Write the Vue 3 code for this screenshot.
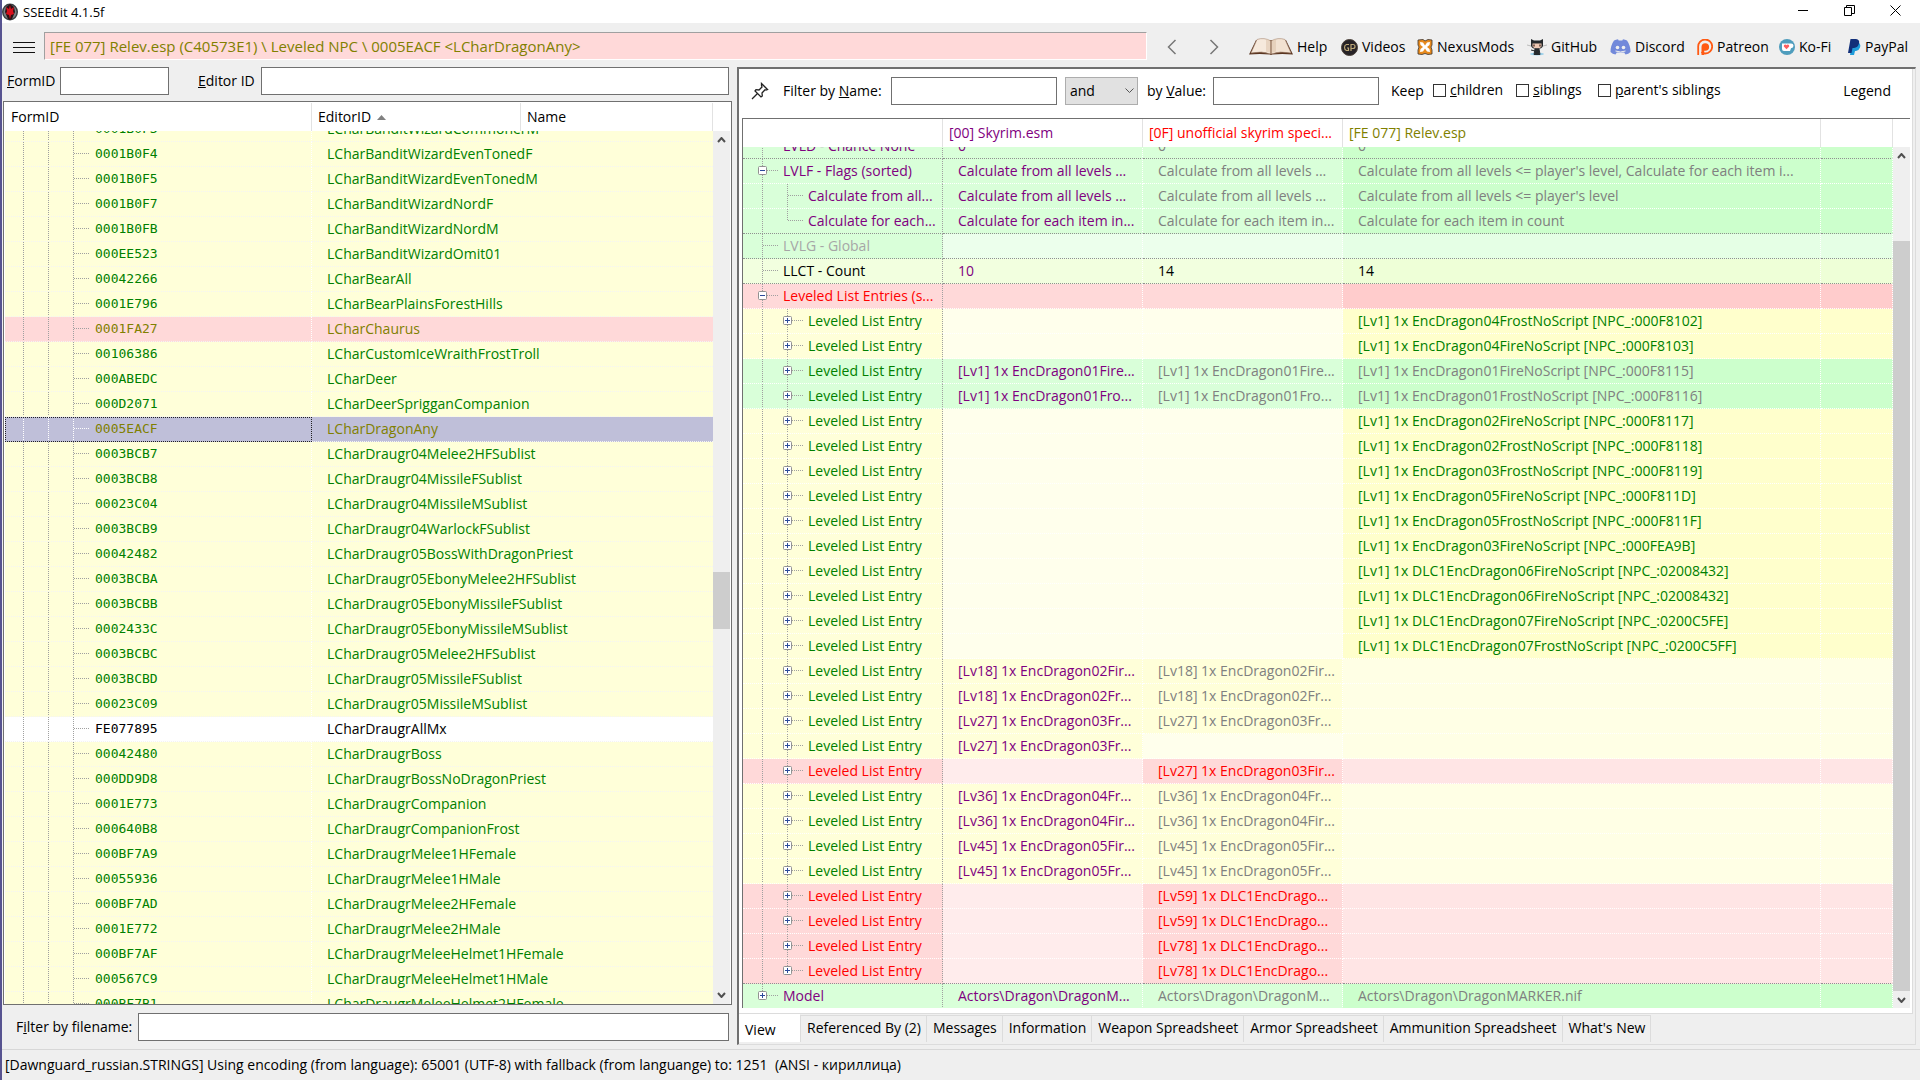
<template>
  <div class="window">
    <header class="titlebar">
      <svg class="app-icon" width="16" height="18" viewBox="0 0 16 18" aria-hidden="true">
        <ellipse cx="8" cy="9" rx="8" ry="8.500" fill="#3c4044" />
        <ellipse cx="8" cy="9" rx="6.500" ry="7" fill="#7b8084" />
        <path d="M8 1 12 4 13 9 10 16 8 17 6 16 3 9 4 4z" fill="#2a1114" />
        <path d="M8 2 9 6 12 4 11 8 12 11 9 12 8 16 7 12 4 11 5 8 4 4 7 6z" fill="#d80f1c" />
      </svg>
      <h1 class="titlebar__text">SSEEdit 4.1.5f</h1>
      <div class="titlebar__controls">
        <button type="button" aria-label="Minimize">
          <svg width="11" height="11" viewBox="0 0 11 11"><path d="M0 5.500H10" /></svg>
        </button>
        <button type="button" aria-label="Restore">
          <svg width="11" height="11" viewBox="0 0 11 11"><path d="M.5 2.500h7v8h-7zM2.500 2.500v-2h8v8h-3" /></svg>
        </button>
        <button type="button" aria-label="Close">
          <svg width="11" height="11" viewBox="0 0 11 11"><path d="M.5.5l10 10M10.500.5l-10 10" /></svg>
        </button>
      </div>
    </header>

    <nav class="toolbar">
      <button type="button" class="toolbar__menu" aria-label="Menu">
        <svg width="22" height="13" viewBox="0 0 22 13"><path d="M0 1.500h22M0 6.500h22M0 11.500h22" stroke="#111" /></svg>
      </button>
      <input class="toolbar__path" type="text" readonly aria-label="Path" :value="currentPath" />
      <div class="toolbar__history">
        <button type="button" aria-label="Back">
          <svg width="10" height="16" viewBox="0 0 10 16"><path d="M8.500 1 1.500 8l7 7" /></svg>
        </button>
        <button type="button" aria-label="Forward">
          <svg width="10" height="16" viewBox="0 0 10 16"><path d="M1.500 1l7 7-7 7" /></svg>
        </button>
      </div>
      <div class="links">
        <a href="#help">
          <svg width="44" height="18" viewBox="0 0 44 18">
            <path d="M7 2 0 16.500q11-1 21 0 1 1 2 0 10-1 21 0L37 2z" fill="#5a3520" />
            <path d="M8 1.500 2 15q11-2.500 20 1V3Q15-1 8 1.500z" fill="#f6e9dc" stroke="#a78a75" stroke-width=".6" />
            <path d="M36 1.500 42 15q-11-2.500-20 1V3q7-4 14-1.500z" fill="#f2e2d2" stroke="#a78a75" stroke-width=".6" />
            <path d="M17 1.500q5 0 5 2.500v11l-5-1.500zM27 1.500q-5 0-5 2.500v11l5-1.500z" fill="#d9bfa6" opacity=".5" />
            <path d="M22 3v13" stroke="#8a6850" />
          </svg>
          Help
        </a>
        <a href="#videos">
          <svg width="17" height="17" viewBox="0 0 17 17">
            <circle cx="8.500" cy="8.500" r="8" fill="#262226" stroke="#4a4038" />
            <path d="M8 5.500H5.500Q3.500 6 3.500 8.500T5.500 11.500H7.500V9H6M10 12V5.500h2q2 0 2 2t-2 2h-2" fill="none" stroke="#bca776" stroke-width="1.200" />
          </svg>
          Videos
        </a>
        <a href="#nexus">
          <svg width="16" height="16" viewBox="0 0 16 16">
            <path d="M1 1l5-.5 2 1.500 3-1.500 4 .5v5l-1 2 1 3v4l-4 .500-3-1-3 1-4-.5v-4l1-3-1-2z" fill="#e88a1d" stroke="#3d352e" stroke-width=".8" />
            <path d="M3 3l3 .5 2 3 2-3 3-.5-.5 3-2.500 2 2.500 2 .5 3-3-.5-2-3-2 3-3 .5.5-3 2.500-2-2.500-2z" fill="#fff" />
          </svg>
          NexusMods
        </a>
        <a href="#github">
          <svg width="20" height="18" viewBox="0 0 20 18">
            <ellipse cx="10" cy="16" rx="7" ry="1.500" fill="#9ad0ea" />
            <path d="M4 1l3 1.500h6L16 1v7q-1 3-6 3T4 8z" fill="#24282b" />
            <path d="M5.500 5.500h9v3q-1 2-4.500 2t-4.500-2z" fill="#efc9b4" />
            <path d="M7 6.500v2M13 6.500v2" stroke="#51342b" stroke-width="1.400" />
            <path d="M8 11h4l1 5.500H7zM8 13l-4-1" fill="#24282b" stroke="#24282b" />
            <path d="M0 7l4 1M20 7l-4 1" stroke="#9b9b9b" stroke-width=".6" />
          </svg>
          GitHub
        </a>
        <a href="#discord">
          <svg width="21" height="16" viewBox="0 0 21 16">
            <path d="M4 1.500Q6 .5 8 .3l.7 1.200h3.600L13 .3q2 .2 4 1.200 3.500 5 3.500 11.500-2 2-5 2.500l-1.300-2H6.800l-1.300 2q-3-.5-5-2.500Q.5 6.500 4 1.500z" fill="#7289da" />
            <circle cx="7.500" cy="8.500" r="1.800" fill="#efefef" />
            <circle cx="13.500" cy="8.500" r="1.800" fill="#efefef" />
            <path d="M5.500 12q5 2 10 0" fill="none" stroke="#efefef" />
          </svg>
          Discord
        </a>
        <a href="#patreon">
          <svg width="16" height="16" viewBox="0 0 16 16">
            <path d="M1.200 16V8a7 7 0 1 1 7 6.500Q6 14.500 4.500 13" fill="none" stroke="#ff5a13" stroke-width="1.800" />
            <path d="M4.500 16V8a3.800 3.800 0 1 1 3.800 3.800H7.200V16z" fill="#ff5a13" />
          </svg>
          Patreon
        </a>
        <a href="#kofi">
          <svg width="16" height="16" viewBox="0 0 16 16">
            <circle cx="8" cy="8" r="8" fill="#4f9dbd" />
            <path d="M3 4.500h9q2.500 0 2.500 2.300T12 9.300L11 12H5q-2 0-2-2z" fill="#fff" />
            <path d="M7.500 10.200 4.800 7.500Q4.500 5.500 6.200 5.500q1 0 1.300.8.300-.8 1.300-.8 1.700 0 1.400 2z" fill="#ff5f5f" />
          </svg>
          Ko-Fi
        </a>
        <a href="#paypal">
          <svg width="13" height="16" viewBox="0 0 13 16">
            <path d="M4 4h7q2 1.500 1 4.500T8 12H7l-1 4H2z" fill="#1f9ddb" />
            <path d="M2.500 0H8q4 .5 3 4.500T6 9H4.500l-1 5H0z" fill="#12307a" />
          </svg>
          PayPal
        </a>
      </div>
    </nav>

    <main class="workspace">
      <section class="nav-pane">
        <div class="id-filter">
          <label for="form-id"><u>F</u>ormID</label>
          <input id="form-id" class="field id-filter__form" type="text" />
          <label class="id-filter__editor-label" for="editor-id"><u>E</u>ditor ID</label>
          <input id="editor-id" class="field id-filter__editor" type="text" />
        </div>

        <div class="nav-tree">
          <div ref="navScroll" class="scroller">
            <table>
              <colgroup>
                <col class="col-form" />
                <col class="col-editor" />
                <col />
              </colgroup>
              <thead>
                <tr>
                  <th>FormID</th>
                  <th>
                    EditorID
                    <svg width="9" height="5" viewBox="0 0 9 5"><path d="M0 5 4.500 0 9 5z" fill="#808080" /></svg>
                  </th>
                  <th>Name</th>
                </tr>
              </thead>
              <tbody>
                <tr v-for="[formId, editorId, state] in records" :key="formId" :class="state">
                  <td class="form-cell">
                    <div class="tree-cell">
                      <svg class="branch" width="90" height="24">
                        <path d="M18.500 0v24M43.500 0v24M68.500 0v24M69 11.500h16" />
                      </svg>
                      {{ formId }}
                    </div>
                  </td>
                  <td class="editor-cell" colspan="2">{{ editorId }}</td>
                </tr>
              </tbody>
            </table>
          </div>
          <div class="scrollbar">
            <button type="button" aria-label="Scroll up"><svg width="9" height="6" viewBox="0 0 9 6"><path d="M1 5l3.500-4L8 5" /></svg></button>
            <div class="scrollbar__gap" :style="{ flexGrow: 423 }"></div>
            <div class="scrollbar__thumb" :style="{ flexGrow: 57 }"></div>
            <div class="scrollbar__gap" :style="{ flexGrow: 358 }"></div>
            <button type="button" aria-label="Scroll down"><svg width="9" height="6" viewBox="0 0 9 6"><path d="M1 1l3.500 4L8 1" /></svg></button>
          </div>
        </div>

        <div class="file-filter">
          <label for="file-name">F<u>i</u>lter by filename:</label>
          <input id="file-name" class="field" type="text" />
        </div>
      </section>

      <section class="view-pane">
        <div class="view-body">
          <div class="view-filter">
            <button type="button" class="view-filter__pin" aria-label="Pin">
              <svg width="18" height="18" viewBox="0 0 18 18">
                <path d="M10.500 1.500l6 6-1.500.5-1-.3-3 3.300.3 3-1.300 1-6-6 1-1.300 3 .3 3-3-.5-1.500zM6.500 11.500l-5.500 5.500" fill="none" stroke="#222" stroke-width="1.300" />
              </svg>
            </button>
            <label for="by-name">Filter by <u>N</u>ame:</label>
            <input id="by-name" class="field" type="text" />
            <div class="combo">
              <select aria-label="Filter operator">
                <option>and</option>
                <option>or</option>
              </select>
              <svg width="9" height="6" viewBox="0 0 9 6"><path d="M.5.5l4 4 4-4" fill="none" stroke="#555" /></svg>
            </div>
            <label class="view-filter__value" for="by-value">by <u>V</u>alue:</label>
            <input id="by-value" class="field" type="text" />
            <span class="view-filter__keep">Keep</span>
            <div class="checks">
              <label><input type="checkbox" /><span><u>c</u>hildren</span></label>
              <label><input type="checkbox" /><span><u>s</u>iblings</span></label>
              <label><input type="checkbox" /><span><u>p</u>arent's siblings</span></label>
            </div>
            <button type="button" class="view-filter__legend">Legend</button>
          </div>

          <div class="record-grid">
            <div ref="gridScroll" class="scroller">
              <table>
                <colgroup>
                  <col class="col-plugin" />
                  <col class="col-plugin" />
                  <col class="col-plugin" />
                  <col class="col-wide" />
                  <col />
                </colgroup>
                <thead>
                  <tr>
                    <th></th>
                    <th class="purple">[00] Skyrim.esm</th>
                    <th class="red">[0F] unofficial skyrim speci...</th>
                    <th class="olive">[FE 077] Relev.esp</th>
                    <th></th>
                  </tr>
                </thead>
                <tbody>
                  <tr
                    v-for="(row, idx) in gridRows"
                    :key="idx"
                    :class="['tone-' + row.tone, { 'group-end': row.groupEnd }]"
                  >
                    <td class="name-cell" :class="row.color">
                      <div class="tree-cell">
                        <svg class="branch" :width="row.level ? 65 : 40" height="24">
                          <path :d="branchPath(row)" />
                          <g v-if="row.node" :transform="`translate(${row.level ? 40 : 15} 7)`">
                            <rect class="node" x=".5" y=".5" width="8" height="8" rx="1" />
                            <path class="node-mark" :d="row.node === '+' ? 'M2 4.500h5M4.500 2v5' : 'M2 4.500h5'" />
                          </g>
                        </svg>
                        <span>{{ row.name }}</span>
                      </div>
                    </td>
                    <td
                      v-for="(cell, col) in row.cells"
                      :key="col"
                      :class="[cell[1], { relev: col === 2, light: !cell[0] && !row.solid }]"
                    >{{ cell[0] }}</td>
                    <td class="relev" :class="{ light: !row.cells[2][0] && !row.solid }"></td>
                  </tr>
                </tbody>
              </table>
            </div>
            <div class="scrollbar">
              <button type="button" aria-label="Scroll up"><svg width="9" height="6" viewBox="0 0 9 6"><path d="M1 5l3.500-4L8 5" /></svg></button>
              <div class="scrollbar__gap" :style="{ flexGrow: 77 }"></div>
              <div class="scrollbar__thumb" :style="{ flexGrow: 751 }"></div>
              <button type="button" aria-label="Scroll down"><svg width="9" height="6" viewBox="0 0 9 6"><path d="M1 1l3.500 4L8 1" /></svg></button>
            </div>
          </div>
        </div>

        <div class="tabs" role="tablist">
          <button
            v-for="tab in tabs"
            :key="tab"
            type="button"
            role="tab"
            class="tab"
            :class="{ 'tab--active': tab === activeTab }"
            :aria-selected="tab === activeTab"
            @click="activeTab = tab"
          >
            {{ tab }}
          </button>
        </div>
      </section>
    </main>

    <footer class="statusbar">[Dawnguard_russian.STRINGS] Using encoding (from language): 65001 (UTF-8) with fallback (from languange) to: 1251&nbsp; (ANSI - кириллица)</footer>
  </div>
</template>

<script setup>
import { onMounted, ref } from 'vue';

const currentPath = '[FE 077] Relev.esp (C40573E1) \\ Leveled NPC \\ 0005EACF <LCharDragonAny>';

const records = [
  ['0001B0F3', 'LCharBanditWizardCommonerM'],
  ['0001B0F4', 'LCharBanditWizardEvenTonedF'],
  ['0001B0F5', 'LCharBanditWizardEvenTonedM'],
  ['0001B0F7', 'LCharBanditWizardNordF'],
  ['0001B0FB', 'LCharBanditWizardNordM'],
  ['000EE523', 'LCharBanditWizardOmit01'],
  ['00042266', 'LCharBearAll'],
  ['0001E796', 'LCharBearPlainsForestHills'],
  ['0001FA27', 'LCharChaurus', 'conflict'],
  ['00106386', 'LCharCustomIceWraithFrostTroll'],
  ['000ABEDC', 'LCharDeer'],
  ['000D2071', 'LCharDeerSprigganCompanion'],
  ['0005EACF', 'LCharDragonAny', 'selected'],
  ['0003BCB7', 'LCharDraugr04Melee2HFSublist'],
  ['0003BCB8', 'LCharDraugr04MissileFSublist'],
  ['00023C04', 'LCharDraugr04MissileMSublist'],
  ['0003BCB9', 'LCharDraugr04WarlockFSublist'],
  ['00042482', 'LCharDraugr05BossWithDragonPriest'],
  ['0003BCBA', 'LCharDraugr05EbonyMelee2HFSublist'],
  ['0003BCBB', 'LCharDraugr05EbonyMissileFSublist'],
  ['0002433C', 'LCharDraugr05EbonyMissileMSublist'],
  ['0003BCBC', 'LCharDraugr05Melee2HFSublist'],
  ['0003BCBD', 'LCharDraugr05MissileFSublist'],
  ['00023C09', 'LCharDraugr05MissileMSublist'],
  ['FE077895', 'LCharDraugrAllMx', 'own'],
  ['00042480', 'LCharDraugrBoss'],
  ['000DD9D8', 'LCharDraugrBossNoDragonPriest'],
  ['0001E773', 'LCharDraugrCompanion'],
  ['000640B8', 'LCharDraugrCompanionFrost'],
  ['000BF7A9', 'LCharDraugrMelee1HFemale'],
  ['00055936', 'LCharDraugrMelee1HMale'],
  ['000BF7AD', 'LCharDraugrMelee2HFemale'],
  ['0001E772', 'LCharDraugrMelee2HMale'],
  ['000BF7AF', 'LCharDraugrMeleeHelmet1HFemale'],
  ['000567C9', 'LCharDraugrMeleeHelmet1HMale'],
  ['000BF7B1', 'LCharDraugrMeleeHelmet2HFemale'],
];

const empty = ['', ''];

// Leveled list entry; the cells are Skyrim.esm, USSEP and Relev.esp.
const entry = (tone, color, base, patch, relev) => ({
  name: 'Leveled List Entry',
  tone,
  color,
  level: 1,
  node: '+',
  cells: [
    base ? [base, 'purple'] : empty,
    patch ? [patch, color === 'red' ? 'red' : 'gray'] : empty,
    relev ? [relev, tone === 'green' ? 'gray' : 'dark-green'] : empty,
  ],
});

const added = (text) => entry('yellow', 'dark-green', '', '', `[Lv1] 1x ${text}`);
const kept = (text, relev) => entry('green', 'dark-green', text, text, relev);
const removed = (text) => entry('yellow', 'dark-green', text, text, '');
const lost = (text) => entry('red', 'red', '', text, '');

const flags = 'Calculate from all levels ...';
const perItem = 'Calculate for each item in...';

const gridRows = [
  {
    name: 'LVLD - Chance None', tone: 'green', color: 'purple', level: 0, groupEnd: true,
    cells: [['0', 'purple'], ['0', 'gray'], ['0', 'gray']],
  },
  {
    name: 'LVLF - Flags (sorted)', tone: 'green', color: 'purple', level: 0, node: '-',
    cells: [[flags, 'purple'], [flags, 'gray'], ["Calculate from all levels <= player's level, Calculate for each item i...", 'gray']],
  },
  {
    name: 'Calculate from all...', tone: 'green', color: 'purple', level: 1,
    cells: [[flags, 'purple'], [flags, 'gray'], ["Calculate from all levels <= player's level", 'gray']],
  },
  {
    name: 'Calculate for each...', tone: 'green', color: 'purple', level: 1, last: true, groupEnd: true,
    cells: [[perItem, 'purple'], [perItem, 'gray'], ['Calculate for each item in count', 'gray']],
  },
  { name: 'LVLG - Global', tone: 'green', color: 'silver', level: 0, groupEnd: true, cells: [empty, empty, empty] },
  {
    name: 'LLCT - Count', tone: 'lime', color: 'black', level: 0, groupEnd: true,
    cells: [['10', 'purple'], ['14', 'black'], ['14', 'black']],
  },
  { name: 'Leveled List Entries (s...', tone: 'red', color: 'red', level: 0, node: '-', solid: true, cells: [empty, empty, empty] },
  added('EncDragon04FrostNoScript [NPC_:000F8102]'),
  added('EncDragon04FireNoScript [NPC_:000F8103]'),
  kept('[Lv1] 1x EncDragon01Fire...', '[Lv1] 1x EncDragon01FireNoScript [NPC_:000F8115]'),
  kept('[Lv1] 1x EncDragon01Fro...', '[Lv1] 1x EncDragon01FrostNoScript [NPC_:000F8116]'),
  added('EncDragon02FireNoScript [NPC_:000F8117]'),
  added('EncDragon02FrostNoScript [NPC_:000F8118]'),
  added('EncDragon03FrostNoScript [NPC_:000F8119]'),
  added('EncDragon05FireNoScript [NPC_:000F811D]'),
  added('EncDragon05FrostNoScript [NPC_:000F811F]'),
  added('EncDragon03FireNoScript [NPC_:000FEA9B]'),
  added('DLC1EncDragon06FireNoScript [NPC_:02008432]'),
  added('DLC1EncDragon06FireNoScript [NPC_:02008432]'),
  added('DLC1EncDragon07FireNoScript [NPC_:0200C5FE]'),
  added('DLC1EncDragon07FrostNoScript [NPC_:0200C5FF]'),
  removed('[Lv18] 1x EncDragon02Fir...'),
  removed('[Lv18] 1x EncDragon02Fr...'),
  removed('[Lv27] 1x EncDragon03Fr...'),
  entry('yellow', 'dark-green', '[Lv27] 1x EncDragon03Fr...', '', ''),
  lost('[Lv27] 1x EncDragon03Fir...'),
  removed('[Lv36] 1x EncDragon04Fr...'),
  removed('[Lv36] 1x EncDragon04Fir...'),
  removed('[Lv45] 1x EncDragon05Fir...'),
  removed('[Lv45] 1x EncDragon05Fr...'),
  lost('[Lv59] 1x DLC1EncDrago...'),
  lost('[Lv59] 1x DLC1EncDrago...'),
  lost('[Lv78] 1x DLC1EncDrago...'),
  { ...lost('[Lv78] 1x DLC1EncDrago...'), last: true, groupEnd: true },
  {
    name: 'Model', tone: 'green', color: 'purple', level: 0, node: '+', last: true,
    cells: [['Actors\\Dragon\\DragonM...', 'purple'], ['Actors\\Dragon\\DragonM...', 'gray'], ['Actors\\Dragon\\DragonMARKER.nif', 'gray']],
  },
];

const branchPath = ({ level, last }) => {
  const end = last ? 12 : 24;
  if (level === 0) {
    return `M19.5 0v${end}M20 11.5h15`;
  }
  // The outer rail stops only at the last top-level row.
  return `M19.5 0v24M44.5 0v${end}M45 11.5h15`;
};

const tabs = [
  'View',
  'Referenced By (2)',
  'Messages',
  'Information',
  'Weapon Spreadsheet',
  'Armor Spreadsheet',
  'Ammunition Spreadsheet',
  "What's New",
];
const activeTab = ref('View');

const navScroll = ref(null);
const gridScroll = ref(null);

onMounted(() => {
  navScroll.value.scrollTop = 14;
  gridScroll.value.scrollTop = 13;
});
</script>

<style>
body {
  background: #efefef;
}
</style>

<style scoped>
* {
  box-sizing: border-box;
}

.window {
  display: flex;
  flex-direction: column;
  height: 100vh;
  border-left: 2px solid #575390;
  background: #efefef;
  color: #000;
  font: 14px/20px "Open Sans", "Noto Sans", sans-serif;
  white-space: nowrap;
}

button,
input,
select {
  font: inherit;
  color: inherit;
}

button {
  padding: 0;
  border: 0;
  background: none;
}

.titlebar {
  display: flex;
  align-items: center;
  height: 23px;
  background: #fff;
}

.app-icon {
  margin-right: 5px;
}

.titlebar__text {
  margin: 0;
  font-size: 13px;
  font-weight: 400;
}

.titlebar__controls {
  display: flex;
  margin: 0 2px 2px auto;
}

.titlebar__controls button {
  display: flex;
  justify-content: center;
  width: 46px;
}

.titlebar__controls path {
  fill: none;
  stroke: #000;
}

.toolbar {
  display: flex;
  align-items: center;
  height: 44px;
  padding: 4px 12px 0 11px;
}

.toolbar__menu {
  display: flex;
  width: 31px;
}

.toolbar__path {
  flex: 1;
  height: 28px;
  margin-bottom: 3px;
  padding: 0 5px;
  border: 1px solid #fff;
  border-top-color: #a0a0a0;
  border-left-color: #a0a0a0;
  background: #ffd9d9;
  color: #808000;
  font-size: 15px;
}

.toolbar__history {
  display: flex;
  gap: 32px;
  padding: 0 30px 0 20px;
}

.toolbar__history button {
  display: flex;
}

.toolbar__history path {
  fill: none;
  stroke: #777;
  stroke-width: 1.5;
}

.links {
  display: grid;
  grid-template-columns: 92px 76px 110px 83px 87px 82px 69px 60px;
}

.links a {
  display: flex;
  align-items: center;
  gap: 4px;
  color: #000;
  text-decoration: none;
}

.links svg {
  flex: none;
}

.workspace {
  display: flex;
  flex: 1;
  gap: 5px;
  min-height: 0;
  padding: 0 4px 4px 1px;
}

.field {
  min-width: 0;
  height: 28px;
  padding: 0 4px;
  border: 1px solid #707070;
  background: #fff;
}

.nav-pane {
  display: flex;
  flex-direction: column;
  width: 729px;
}

.id-filter {
  display: flex;
  align-items: center;
  height: 34px;
  padding: 0 3px 6px 4px;
}

.id-filter label {
  width: 53px;
}

.id-filter__form {
  width: 109px;
}

.id-filter .id-filter__editor-label {
  width: 63px;
  margin-left: 29px;
}

.id-filter__editor {
  flex: 1;
}

.nav-tree {
  display: flex;
  flex: 1;
  min-height: 0;
  border: 1px solid #707070;
  background: #fff;
  padding: 1px 1px 0;
}

.scroller {
  flex: 1;
  min-width: 0;
  overflow: hidden;
}

table {
  width: 100%;
  border-spacing: 0;
  table-layout: fixed;
}

th {
  position: sticky;
  top: 0;
  z-index: 1;
  height: 28px;
  padding: 0 6px;
  border-right: 1px solid #e2e2e2;
  background: #fff;
  font-weight: 400;
  text-align: left;
}

td {
  height: 25px;
  padding: 0;
  overflow: hidden;
  border-right: 1px dotted #fff;
  border-bottom: 1px dotted #f4f4f4;
}

.tree-cell {
  display: flex;
  align-items: center;
  height: 24px;
}

.branch {
  flex: none;
}

.branch path {
  fill: none;
  stroke: #a0a0a0;
  stroke-dasharray: 1 1;
}

.col-form {
  width: 307px;
}

.col-editor {
  width: 209px;
}

th svg {
  margin-left: 2px;
  vertical-align: 2px;
}

.nav-tree td {
  background: #ffffd9;
  color: #008000;
}

.form-cell {
  font-family: "DejaVu Sans Mono", monospace;
  font-size: 13px;
}

.nav-tree .editor-cell {
  padding-left: 15px;
  border-right: 0;
}

.nav-tree .conflict td {
  background: #ffd9d9;
  color: #808000;
}

.nav-tree .selected td {
  background: #bfbfd9;
  color: #808000;
}

.selected .form-cell {
  outline: 1px dotted #222;
  outline-offset: -1px;
}

.selected .branch path {
  stroke: #fff;
}

.nav-tree .own td {
  background: #fff;
  color: #000;
}

.scrollbar {
  display: flex;
  flex-direction: column;
  width: 17px;
  border-top: 28px solid #fff;
  background: #efefef;
}

.scrollbar button {
  display: flex;
  align-items: center;
  justify-content: center;
  height: 17px;
}

.scrollbar path {
  fill: none;
  stroke: #505050;
  stroke-width: 2;
}

.scrollbar__thumb {
  background: #cdcdcd;
}

.file-filter {
  display: flex;
  align-items: center;
  height: 40px;
  padding: 4px 3px 0 13px;
}

.file-filter label {
  width: 122px;
}

.file-filter .field {
  flex: 1;
}

.view-pane {
  display: flex;
  flex: 1;
  flex-direction: column;
  min-width: 0;
  border: 1px solid #dcdcdc;
  border-top: 2px solid #707070;
  border-left: 2px solid #707070;
}

.view-body {
  display: flex;
  flex: 1;
  flex-direction: column;
  min-height: 0;
  margin-right: 2px;
  padding: 0 2px 5px 3px;
  border-right: 1px solid #dcdcdc;
  border-bottom: 1px solid #dcdcdc;
  background: #fff;
}

.view-filter {
  display: flex;
  align-items: center;
  height: 49px;
  padding: 0 19px 5px 9px;
}

.view-filter__pin {
  display: flex;
  width: 32px;
}

.view-filter label[for="by-name"] {
  width: 108px;
}

.view-filter .field {
  width: 166px;
}

.combo {
  position: relative;
  width: 73px;
  margin: 0 9px 0 8px;
}

.combo select {
  width: 100%;
  height: 28px;
  padding: 0 4px;
  border: 1px solid #adadad;
  border-radius: 0;
  background: #e1e1e1;
  appearance: none;
}

.combo svg {
  position: absolute;
  top: 11px;
  right: 4px;
  pointer-events: none;
}

.view-filter__value {
  width: 66px;
}

.view-filter__keep {
  width: 42px;
  margin-left: 12px;
}

.checks {
  display: grid;
  grid-template-columns: 83px 82px 150px;
  padding-bottom: 2px;
}

.checks label {
  display: flex;
  align-items: center;
  gap: 4px;
}

.checks input {
  width: 13px;
  height: 13px;
  margin: 0;
  border: 1px solid #333;
  background: #fff;
  appearance: none;
}

.view-filter__legend {
  margin-left: auto;
}

.record-grid {
  display: flex;
  flex: 1;
  min-height: 0;
  border-top: 1px solid #707070;
  border-left: 1px solid #707070;
}

.col-plugin {
  width: 200px;
}

.col-wide {
  width: 478px;
}

.record-grid td {
  padding-left: 15px;
  border-bottom-color: #fff;
}

.record-grid td.name-cell {
  padding-left: 0;
  border-right-color: #a0a0a0;
}

.record-grid .group-end td {
  border-bottom-color: #909090;
}

.branch .node {
  fill: #fff;
  stroke: #919191;
}

.branch .node-mark {
  stroke: #2b4a9b;
  stroke-dasharray: none;
}

.tone-green td { background: #d9ffd9; }
.tone-green td.light { background: #ecffec; }
.tone-green td.relev { background: #ccffcc; }
.tone-green td.relev.light { background: #e5ffe5; }
.tone-yellow td { background: #ffffd9; }
.tone-yellow td.light { background: #ffffec; }
.tone-yellow td.relev { background: #ffffcc; }
.tone-yellow td.relev.light { background: #ffffe5; }
.tone-red td { background: #ffd9d9; }
.tone-red td.light { background: #ffecec; }
.tone-red td.relev { background: #ffcccc; }
.tone-red td.relev.light { background: #ffe5e5; }
.tone-lime td { background: #f2ffdf; }
.tone-lime td.relev { background: #eeffd7; }

.purple { color: #800080; }
.red { color: #f00; }
.olive { color: #808000; }
.gray { color: #808080; }
.silver { color: #a6a6a6; }
.dark-green { color: #008000; }
.black { color: #000; }

.tabs {
  display: flex;
  height: 30px;
  padding-bottom: 2px;
}

.tab {
  margin-top: 1px;
  padding: 0 5px 2px 6px;
  border-top: 1px solid #dcdcdc;
  border-right: 1px solid #dcdcdc;
}

.tab--active {
  width: 62px;
  margin-top: 0;
  padding: 2px 6px 0;
  border-top-color: #fff;
  background: #fff;
  text-align: left;
}

.statusbar {
  height: 31px;
  padding: 5px 3px;
  border-top: 1px solid #d7d7d7;
}
</style>
